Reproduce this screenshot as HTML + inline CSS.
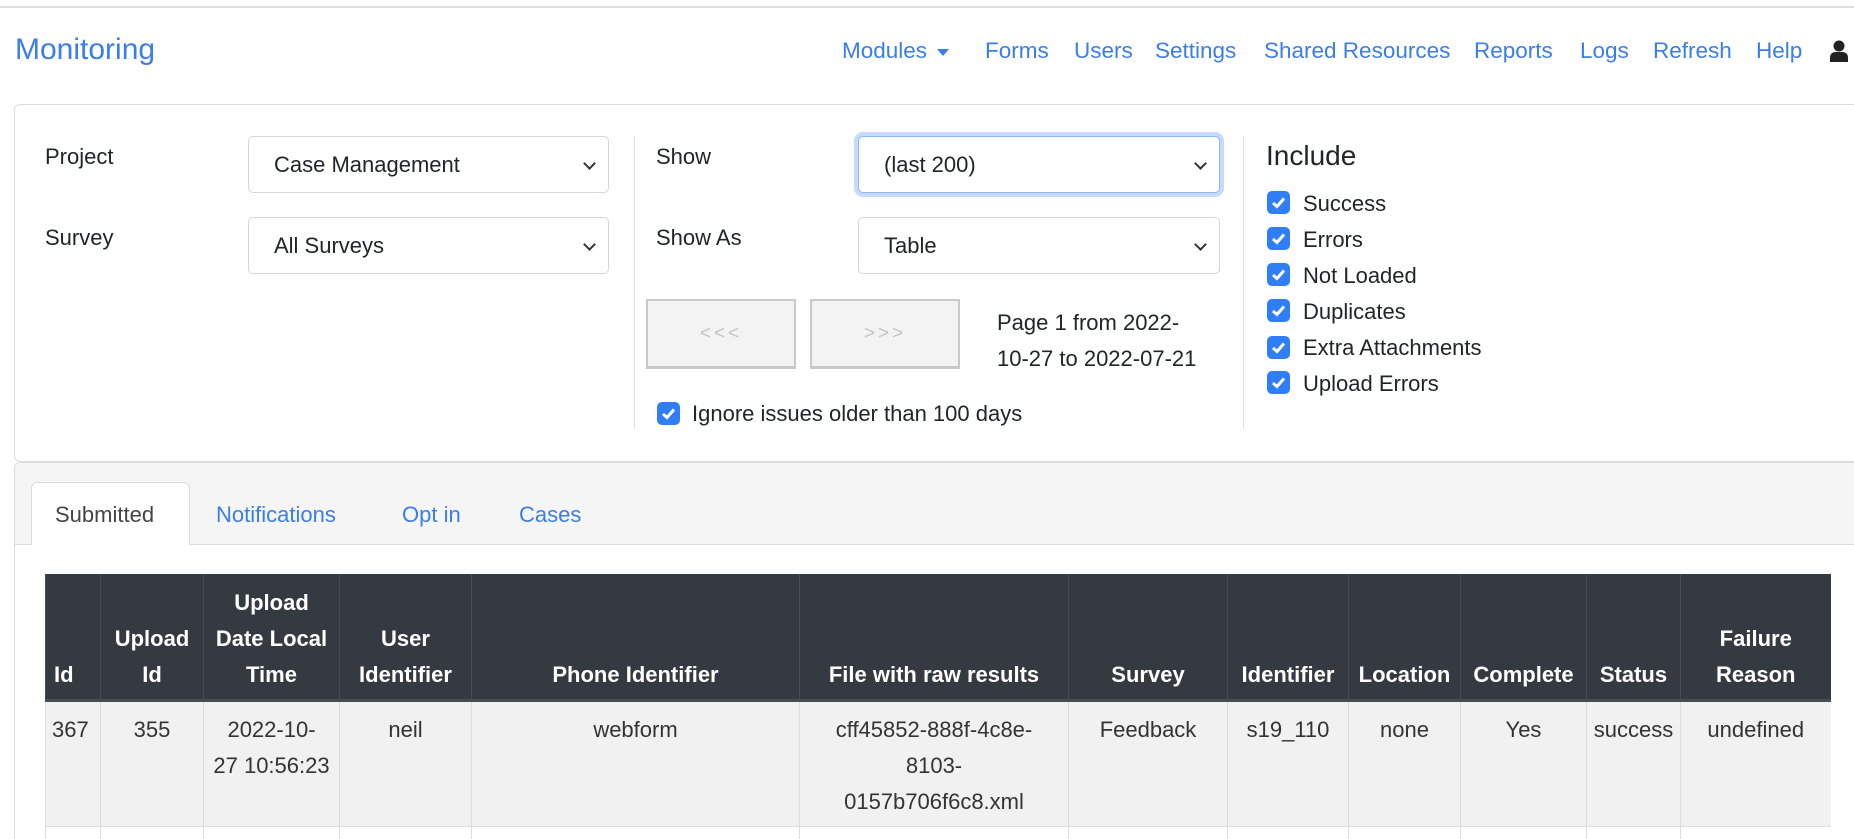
<!DOCTYPE html>
<html><head><meta charset="utf-8">
<style>
*{box-sizing:border-box;margin:0;padding:0}
html{width:1854px;height:839px;overflow:hidden}
body{width:1854px;height:839px;overflow:hidden;background:#fff;font-family:"Liberation Sans",sans-serif;color:#212529;font-size:20px;position:relative}
.a{position:absolute;white-space:nowrap}
.blue{color:#3b7de9}
.topline{position:absolute;left:0;top:6px;width:1854px;height:2px;background:#dcdcdc}
.nav{position:absolute;top:38px;font-size:22.5px;color:#3b7de9}
.card1{position:absolute;left:14px;top:104px;width:1840px;height:358px;border:1px solid #dcdcdc;border-radius:6px 0 0 6px;border-right:none}
.card2{position:absolute;left:14px;top:462px;width:1840px;height:377px;border:1px solid #dcdcdc;border-bottom:none;border-radius:6px 0 0 0;border-right:none;background:#fff}
.card2 .hd{position:absolute;left:0;top:0;right:0;height:82px;background:#f5f5f5;border-bottom:1px solid #dcdcdc;border-radius:6px 0 0 0}
.sel{position:absolute;height:57px;border:1px solid #d3d6da;border-radius:5px;background:#fff;font-size:22px;padding:15px 0 0 25px;color:#212529}
.sel:after{content:"";position:absolute;right:14px;top:22px;width:7px;height:7px;border-right:2px solid #333;border-bottom:2px solid #333;transform:rotate(45deg)}
.focus{border-color:#8fb8f5;box-shadow:0 0 0 4px #c6dafb}
.btn{position:absolute;top:299px;height:70px;background:#f3f3f3;border:2px solid #c9c9c9;border-bottom-width:3px;color:#c4c4c4;font-size:19px;text-align:center;padding-top:22px;letter-spacing:3px}
.cb{position:absolute;width:23px;height:23px;border-radius:5px;background:#2f7ef7}
.cb svg{position:absolute;left:4px;top:5px}
.lbl{position:absolute;font-size:22px;white-space:nowrap}
table{position:absolute;left:45px;top:574px;border-collapse:collapse;table-layout:fixed;width:1785px;font-size:22px}
th{background:#343a40;color:#fff;font-weight:bold;vertical-align:bottom;border-left:1px solid #454d55;border-bottom:3px solid #454d55;line-height:36px;padding:0 2px 6px;text-align:center;height:126px}
td{background:#f1f1f1;border-left:1px solid #dcdcdc;border-bottom:1px solid #dcdcdc;text-align:center;vertical-align:top;line-height:36px;padding:10px 2px 6px;height:123px;color:#333}
tr.r2 td{background:#fff;height:14px;padding:0;border-bottom:none}
</style></head><body>
<div class="topline"></div>
<div class="a blue" style="left:15px;top:33px;font-size:30px">Monitoring</div>
<div class="nav a" style="left:842px">Modules <span style="display:inline-block;width:0;height:0;border-left:6px solid transparent;border-right:6px solid transparent;border-top:7px solid #3b7de9;vertical-align:middle;margin-left:4px"></span></div>
<div class="nav a" style="left:985px">Forms</div>
<div class="nav a" style="left:1074px">Users</div>
<div class="nav a" style="left:1155px">Settings</div>
<div class="nav a" style="left:1264px">Shared Resources</div>
<div class="nav a" style="left:1474px">Reports</div>
<div class="nav a" style="left:1580px">Logs</div>
<div class="nav a" style="left:1653px">Refresh</div>
<div class="nav a" style="left:1756px">Help</div>
<svg class="a" style="left:1829px;top:40px" width="20" height="22" viewBox="0 0 20 22"><circle cx="10" cy="6" r="5.5" fill="#222"/><path d="M1 22 v-4 q0-6 6-6 h6 q6 0 6 6 v4z" fill="#222"/></svg>

<div class="card1"></div>
<div class="lbl" style="left:45px;top:144px">Project</div>
<div class="sel" style="left:248px;top:136px;width:361px">Case Management</div>
<div class="lbl" style="left:45px;top:225px">Survey</div>
<div class="sel" style="left:248px;top:217px;width:361px">All Surveys</div>
<div class="a" style="left:634px;top:136px;width:1px;height:293px;background:#e2e2e2"></div>
<div class="lbl" style="left:656px;top:144px">Show</div>
<div class="sel focus" style="left:858px;top:136px;width:362px">(last 200)</div>
<div class="lbl" style="left:656px;top:225px">Show As</div>
<div class="sel" style="left:858px;top:217px;width:362px">Table</div>
<div class="btn" style="left:646px;width:150px">&lt;&lt;&lt;</div>
<div class="btn" style="left:810px;width:150px">&gt;&gt;&gt;</div>
<div class="lbl" style="left:997px;top:305px;line-height:36px">Page 1 from 2022-<br>10-27 to 2022-07-21</div>
<div class="cb" style="left:657px;top:402px"><svg width="15" height="13" viewBox="0 0 15 13"><path d="M2 7 L6 10.5 L13 2.5" stroke="#fff" stroke-width="3" fill="none"/></svg></div>
<div class="lbl" style="left:692px;top:401px">Ignore issues older than 100 days</div>
<div class="a" style="left:1243px;top:136px;width:1px;height:293px;background:#e2e2e2"></div>
<div class="a" style="left:1266px;top:140px;font-size:28px;font-weight:500">Include</div>
<div class="cb" style="left:1267px;top:191px"><svg width="15" height="13" viewBox="0 0 15 13"><path d="M2 7 L6 10.5 L13 2.5" stroke="#fff" stroke-width="3" fill="none"/></svg></div>
<div class="lbl" style="left:1303px;top:191px">Success</div>
<div class="cb" style="left:1267px;top:227px"><svg width="15" height="13" viewBox="0 0 15 13"><path d="M2 7 L6 10.5 L13 2.5" stroke="#fff" stroke-width="3" fill="none"/></svg></div>
<div class="lbl" style="left:1303px;top:227px">Errors</div>
<div class="cb" style="left:1267px;top:263px"><svg width="15" height="13" viewBox="0 0 15 13"><path d="M2 7 L6 10.5 L13 2.5" stroke="#fff" stroke-width="3" fill="none"/></svg></div>
<div class="lbl" style="left:1303px;top:263px">Not Loaded</div>
<div class="cb" style="left:1267px;top:299px"><svg width="15" height="13" viewBox="0 0 15 13"><path d="M2 7 L6 10.5 L13 2.5" stroke="#fff" stroke-width="3" fill="none"/></svg></div>
<div class="lbl" style="left:1303px;top:299px">Duplicates</div>
<div class="cb" style="left:1267px;top:336px"><svg width="15" height="13" viewBox="0 0 15 13"><path d="M2 7 L6 10.5 L13 2.5" stroke="#fff" stroke-width="3" fill="none"/></svg></div>
<div class="lbl" style="left:1303px;top:335px">Extra Attachments</div>
<div class="cb" style="left:1267px;top:371px"><svg width="15" height="13" viewBox="0 0 15 13"><path d="M2 7 L6 10.5 L13 2.5" stroke="#fff" stroke-width="3" fill="none"/></svg></div>
<div class="lbl" style="left:1303px;top:371px">Upload Errors</div>

<div class="card2"><div class="hd"></div></div>
<div class="a" style="left:31px;top:482px;width:159px;height:63px;background:#fff;border:1px solid #dcdcdc;border-bottom:none;border-radius:6px 6px 0 0"></div>
<div class="lbl" style="left:55px;top:502px;color:#444">Submitted</div>
<div class="lbl blue" style="left:216px;top:502px">Notifications</div>
<div class="lbl blue" style="left:402px;top:502px">Opt in</div>
<div class="lbl blue" style="left:519px;top:502px">Cases</div>

<table>
<colgroup><col style="width:55px"><col style="width:103px"><col style="width:136px"><col style="width:132px"><col style="width:328px"><col style="width:269px"><col style="width:159px"><col style="width:121px"><col style="width:112px"><col style="width:126px"><col style="width:94px"><col style="width:150px"></colgroup>
<tr><th style="text-align:left;padding-left:8px">Id</th><th>Upload Id</th><th>Upload<br>Date Local<br>Time</th><th>User Identifier</th><th>Phone Identifier</th><th>File with raw results</th><th>Survey</th><th>Identifier</th><th>Location</th><th>Complete</th><th>Status</th><th>Failure Reason</th></tr>
<tr><td style="text-align:left;padding-left:6px">367</td><td>355</td><td>2022-10-<br>27 10:56:23</td><td>neil</td><td>webform</td><td>cff45852-888f-4c8e-<br>8103-<br>0157b706f6c8.xml</td><td>Feedback</td><td>s19_110</td><td>none</td><td>Yes</td><td>success</td><td>undefined</td></tr>
<tr class="r2"><td></td><td></td><td></td><td></td><td></td><td></td><td></td><td></td><td></td><td></td><td></td><td></td></tr>
</table>
</body></html>
